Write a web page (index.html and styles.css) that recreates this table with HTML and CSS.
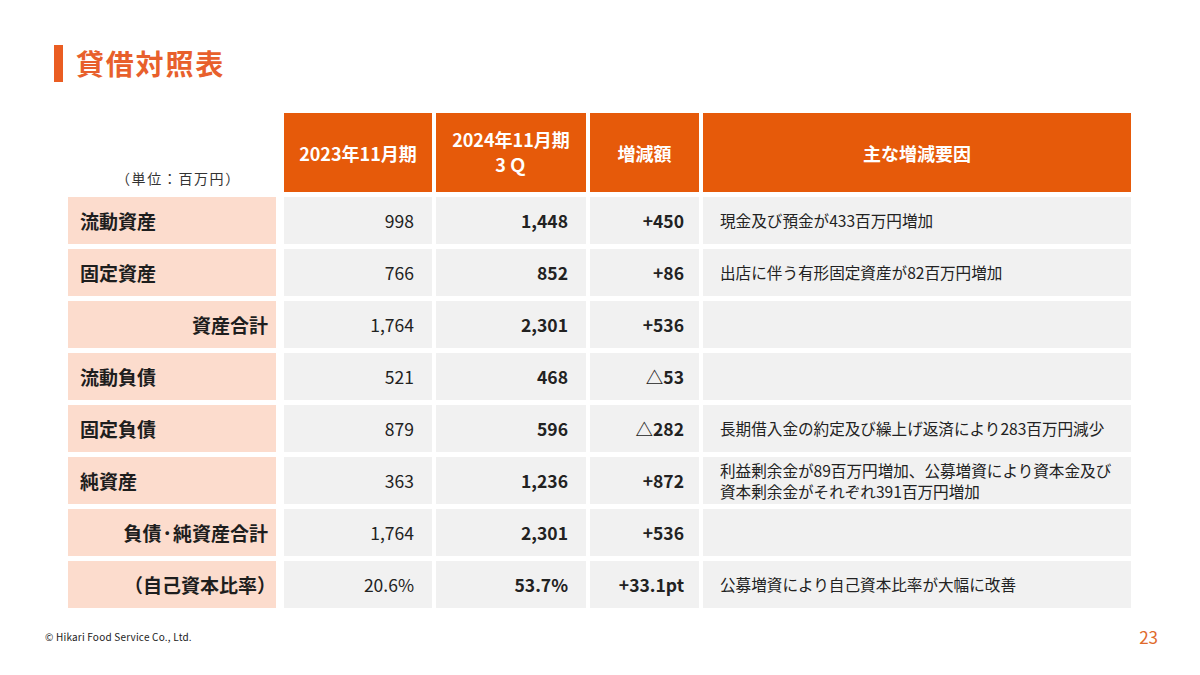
FILE: index.html
```html
<!DOCTYPE html>
<html lang="ja">
<head>
<meta charset="utf-8">
<link rel="stylesheet" href="styles.css">
</head>
<body>
<div class="page">
  <div class="title-row">
    <span class="title-bar"></span>
    <h1 class="title">貸借対照表</h1>
  </div>

  <div class="table">
    <div class="unit">（単位：百万円）</div>
    <div class="th">2023年11月期</div>
    <div class="th two"><span class="stack">2024年11月期<br><span class="q">3Ｑ</span></span></div>
    <div class="th">増減額</div>
    <div class="th">主な増減要因</div>

    <div class="lbl">流動資産</div>
    <div class="num">998</div>
    <div class="num b">1,448</div>
    <div class="num b diff">+450</div>
    <div class="note">現金及び預金が433百万円増加</div>

    <div class="lbl">固定資産</div>
    <div class="num">766</div>
    <div class="num b">852</div>
    <div class="num b diff">+86</div>
    <div class="note">出店に伴う有形固定資産が82百万円増加</div>

    <div class="lbl right">資産合計</div>
    <div class="num">1,764</div>
    <div class="num b">2,301</div>
    <div class="num b diff">+536</div>
    <div class="note"></div>

    <div class="lbl">流動負債</div>
    <div class="num">521</div>
    <div class="num b">468</div>
    <div class="num b diff">△53</div>
    <div class="note"></div>

    <div class="lbl">固定負債</div>
    <div class="num">879</div>
    <div class="num b">596</div>
    <div class="num b diff">△282</div>
    <div class="note">長期借入金の約定及び繰上げ返済により283百万円減少</div>

    <div class="lbl">純資産</div>
    <div class="num">363</div>
    <div class="num b">1,236</div>
    <div class="num b diff">+872</div>
    <div class="note">利益剰余金が89百万円増加、公募増資により資本金及び<br>資本剰余金がそれぞれ391百万円増加</div>

    <div class="lbl right"><span>負債<span class="dot">･</span>純資産合計</span></div>
    <div class="num">1,764</div>
    <div class="num b">2,301</div>
    <div class="num b diff">+536</div>
    <div class="note"></div>

    <div class="lbl right paren">（自己資本比率）</div>
    <div class="num">20.6%</div>
    <div class="num b">53.7%</div>
    <div class="num b diff">+33.1pt</div>
    <div class="note">公募増資により自己資本比率が大幅に改善</div>
  </div>

  <div class="footer">
    <span class="copy">© Hikari Food Service Co., Ltd.</span>
    <span class="pageno">23</span>
  </div>
</div>
</body>
</html>
```

FILE: styles.css
```css
* { box-sizing: border-box; }
html, body { margin: 0; padding: 0; background: #fff; }
body {
  font-family: "Noto Sans CJK JP", "Noto Sans", sans-serif;
  color: #222;
  width: 1200px;
  height: 675px;
  overflow: hidden;
}
.page {
  width: 1200px;
  height: 675px;
  display: flex;
  flex-direction: column;
}
.title-row {
  display: flex;
  align-items: center;
  padding: 45px 0 0 54px;
  height: 82px;
}
.title-bar {
  width: 9px;
  height: 37px;
  background: #ea5d22;
}
.title {
  margin: 0 0 0 13px;
  font-size: 28px;
  font-weight: 700;
  color: #e8602c;
  letter-spacing: 1.8px;
  line-height: 37px;
}
.table {
  margin: 31px 0 0 68px;
  display: grid;
  grid-template-columns: 212px 148px 150px 109px 428px;
  grid-template-rows: 79px repeat(8, 47px);
  column-gap: 4px;
  row-gap: 5px;
}
.unit {
  align-self: end;
  font-size: 14px;
  letter-spacing: 1.6px;
  color: #333;
  padding: 0 0 4px 48px;
  white-space: nowrap;
}
.th {
  background: #e65a0a;
  color: #fff;
  font-weight: 700;
  font-size: 18px;
  line-height: 24px;
  display: flex;
  align-items: center;
  justify-content: center;
  text-align: center;
}
.th.two { line-height: 25px; padding-bottom: 2px; }
.stack { display: block; }
.q { letter-spacing: 3px; padding-left: 3px; }
.lbl {
  background: #fcdccd;
  margin-right: 4px;
  font-weight: 700;
  font-size: 19px;
  display: flex;
  align-items: center;
  padding: 0 12px;
  color: #1e1e1e;
  white-space: nowrap;
}
.lbl.right { justify-content: flex-end; padding-right: 8px; }
.lbl.paren { padding-right: 0; }
.dot { padding: 0 1px; }
.num {
  background: #f1f1f1;
  display: flex;
  align-items: center;
  justify-content: flex-end;
  padding-right: 18px;
  font-size: 17.5px;
  color: #222;
}
.num.b { font-weight: 700; }
.num.diff { padding-right: 15px; }
.note {
  background: #f1f1f1;
  display: flex;
  align-items: center;
  padding-left: 17px;
  font-size: 15.6px;
  line-height: 21px;
  color: #222;
  white-space: nowrap;
}
.footer {
  display: flex;
  justify-content: space-between;
  align-items: center;
  padding: 16px 42px 0 45px;
}
.copy { font-size: 10px; color: #222; letter-spacing: 0.2px; }
.pageno { font-size: 17px; color: #e06a2c; }
```
